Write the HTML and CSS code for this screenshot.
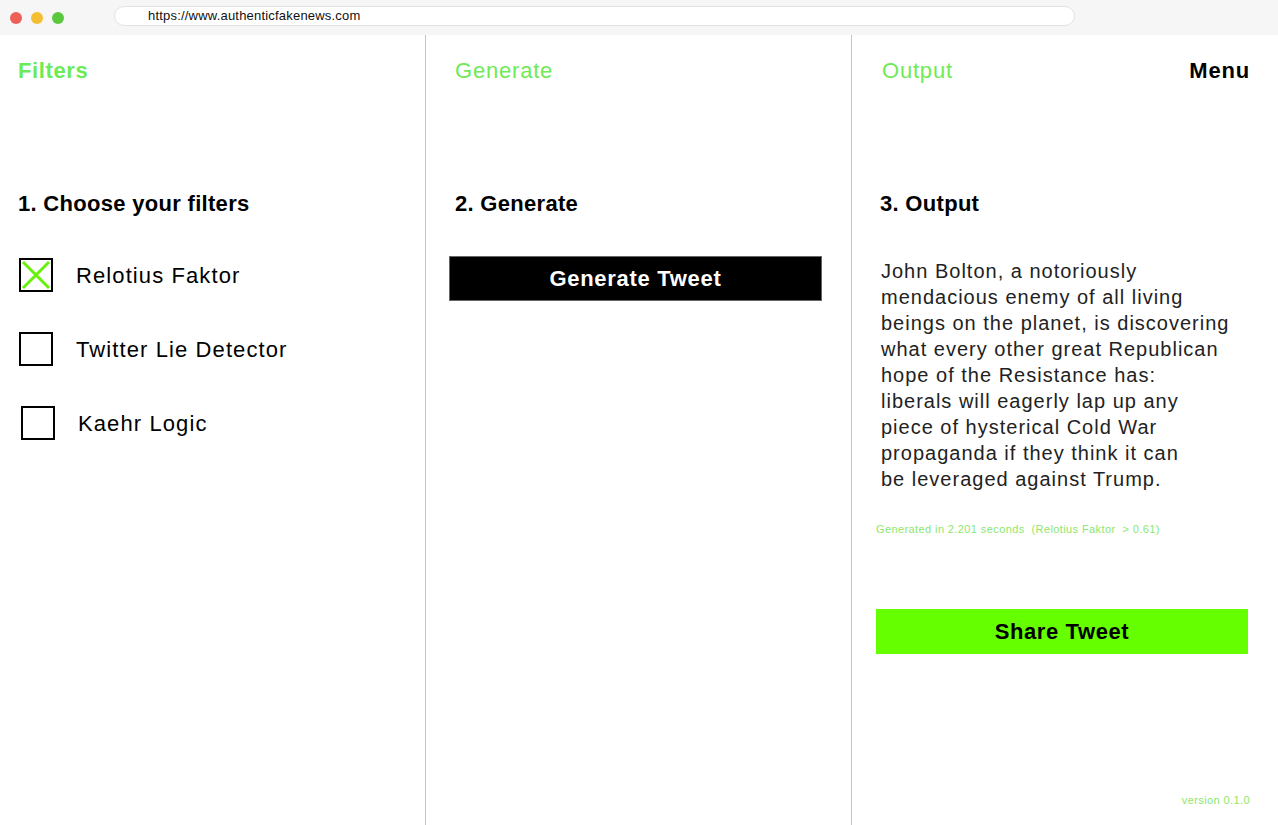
FILE: index.html
```html
<!DOCTYPE html>
<html lang="en">
<head>
    <meta charset="UTF-8">
    <meta name="viewport" content="width=device-width, initial-scale=1.0">
    <title>Authentic Fake News</title>
    <link rel="stylesheet" href="styles.css">
</head>
<body>
    <div class="chrome">
        <div class="dots">
            <span class="dot red"></span>
            <span class="dot yellow"></span>
            <span class="dot green"></span>
        </div>
        <div class="url">https://www.authenticfakenews.com</div>
    </div>

    <main class="app">
        <section class="col col-filters">
            <div class="col-head">
                <h1 class="tab tab-bold">Filters</h1>
            </div>
            <h2 class="step">1. Choose your filters</h2>
            <ul class="filters">
                <li class="filter">
                    <span class="box checked">
                        <svg viewBox="0 0 30 30" width="30" height="30"><path d="M2 2 L28 28 M28 2 L2 28" stroke="#66f20a" stroke-width="3" fill="none"/></svg>
                    </span>
                    <span class="filter-name">Relotius Faktor</span>
                </li>
                <li class="filter">
                    <span class="box"></span>
                    <span class="filter-name">Twitter Lie Detector</span>
                </li>
                <li class="filter filter-shift">
                    <span class="box"></span>
                    <span class="filter-name">Kaehr Logic</span>
                </li>
            </ul>
        </section>

        <section class="col col-generate">
            <div class="col-head">
                <h1 class="tab">Generate</h1>
            </div>
            <h2 class="step">2. Generate</h2>
            <button class="btn btn-dark">Generate Tweet</button>
        </section>

        <section class="col col-output">
            <div class="col-head">
                <h1 class="tab">Output</h1>
                <a class="menu" href="#">Menu</a>
            </div>
            <h2 class="step">3. Output</h2>
            <p class="tweet">John Bolton, a notoriously<br>mendacious enemy of all living<br>beings on the planet, is discovering<br>what every other great Republican<br>hope of the Resistance has:<br>liberals will eagerly lap up any<br>piece of hysterical Cold War<br>propaganda if they think it can<br>be leveraged against Trump.</p>
            <p class="meta">Generated in 2.201 seconds&nbsp; (Relotius Faktor &nbsp;&gt; 0.61)</p>
            <button class="btn btn-green">Share Tweet</button>
            <p class="version">version 0.1.0</p>
        </section>
    </main>
</body>
</html>
```

FILE: styles.css
```css
* {
    box-sizing: border-box;
}
body {
    margin: 0;
    padding: 0;
    font-family: "Liberation Sans", Arial, sans-serif;
    color: #000;
    background: #fff;
}
.chrome {
    height: 35px;
    background: #f6f6f6;
    display: flex;
    align-items: center;
    padding: 0 10px;
}
.dots {
    display: flex;
    gap: 9px;
    width: 104px;
}
.dot {
    width: 12px;
    height: 12px;
    border-radius: 50%;
}
.red { background: #ed5f57; }
.yellow { background: #f5bd32; }
.green { background: #5ac83f; }
.url {
    width: 961px;
    height: 20px;
    margin-top: -3px;
    background: #fff;
    border: 1px solid #e2e2e2;
    border-radius: 10px;
    font-size: 13px;
    line-height: 18px;
    padding-left: 33px;
    color: #111;
    letter-spacing: 0.2px;
}
.app {
    display: grid;
    grid-template-columns: 426px 425px 427px;
    height: 790px;
}
.col {
    border-left: 1px solid #96ee62;
    padding-top: 22px;
}
.col-filters {
    border-left: none;
    border-right: 1px solid #96ee62;
    padding-left: 18px;
}
.col-generate {
    border-left: none;
    padding-left: 23px;
}
.col-output {
    padding-left: 24px;
    padding-right: 28px;
}
.col-head {
    display: flex;
    justify-content: space-between;
    align-items: center;
    height: 28px;
}
.tab {
    margin: 0;
    font-size: 22px;
    font-weight: normal;
    color: #6eea55;
    line-height: 28px;
    letter-spacing: 0.8px;
}
.tab-bold {
    font-weight: bold;
    letter-spacing: 0.6px;
}
.col-generate .tab,
.col-generate .step {
    margin-left: 6px;
}
.col-output .tab {
    margin-left: 6px;
}
.col-output .step {
    margin-left: 4px;
}
.menu {
    font-size: 22px;
    font-weight: bold;
    color: #000;
    text-decoration: none;
    letter-spacing: 0.8px;
}
.step {
    margin: 105px 0 0;
    font-size: 22px;
    line-height: 28px;
    font-weight: bold;
    letter-spacing: 0.3px;
}
.filters {
    list-style: none;
    margin: 40px 0 0;
    padding: 0;
    display: flex;
    flex-direction: column;
    gap: 40px;
}
.filter {
    display: flex;
    align-items: center;
    height: 34px;
    padding-left: 1px;
}
.filter-shift {
    padding-left: 3px;
}
.box {
    width: 34px;
    height: 34px;
    border: 2px solid #000;
    display: flex;
    align-items: center;
    justify-content: center;
}
.filter-name {
    font-size: 22px;
    margin-left: 23px;
    margin-top: 2px;
    letter-spacing: 1.1px;
}
.btn {
    display: block;
    width: 373px;
    height: 45px;
    font-family: inherit;
    font-size: 22px;
    font-weight: bold;
    cursor: pointer;
}
.btn-dark {
    margin-top: 38px;
    background: #000;
    color: #fff;
    border: 1px solid #666;
    letter-spacing: 0.7px;
}
.btn-green {
    width: 372px;
    margin-top: 74px;
    background: #66ff00;
    color: #000;
    border: none;
    letter-spacing: 0.6px;
}
.tweet {
    margin: 40px 0 0 5px;
    font-size: 20px;
    line-height: 26px;
    color: #222;
    letter-spacing: 1px;
}
.meta {
    margin: 31px 0 0;
    font-size: 11px;
    color: #8be86b;
    letter-spacing: 0.4px;
}
.version {
    margin: 140px 0 0;
    text-align: right;
    font-size: 11px;
    color: #8be86b;
    letter-spacing: 0.4px;
}
```
